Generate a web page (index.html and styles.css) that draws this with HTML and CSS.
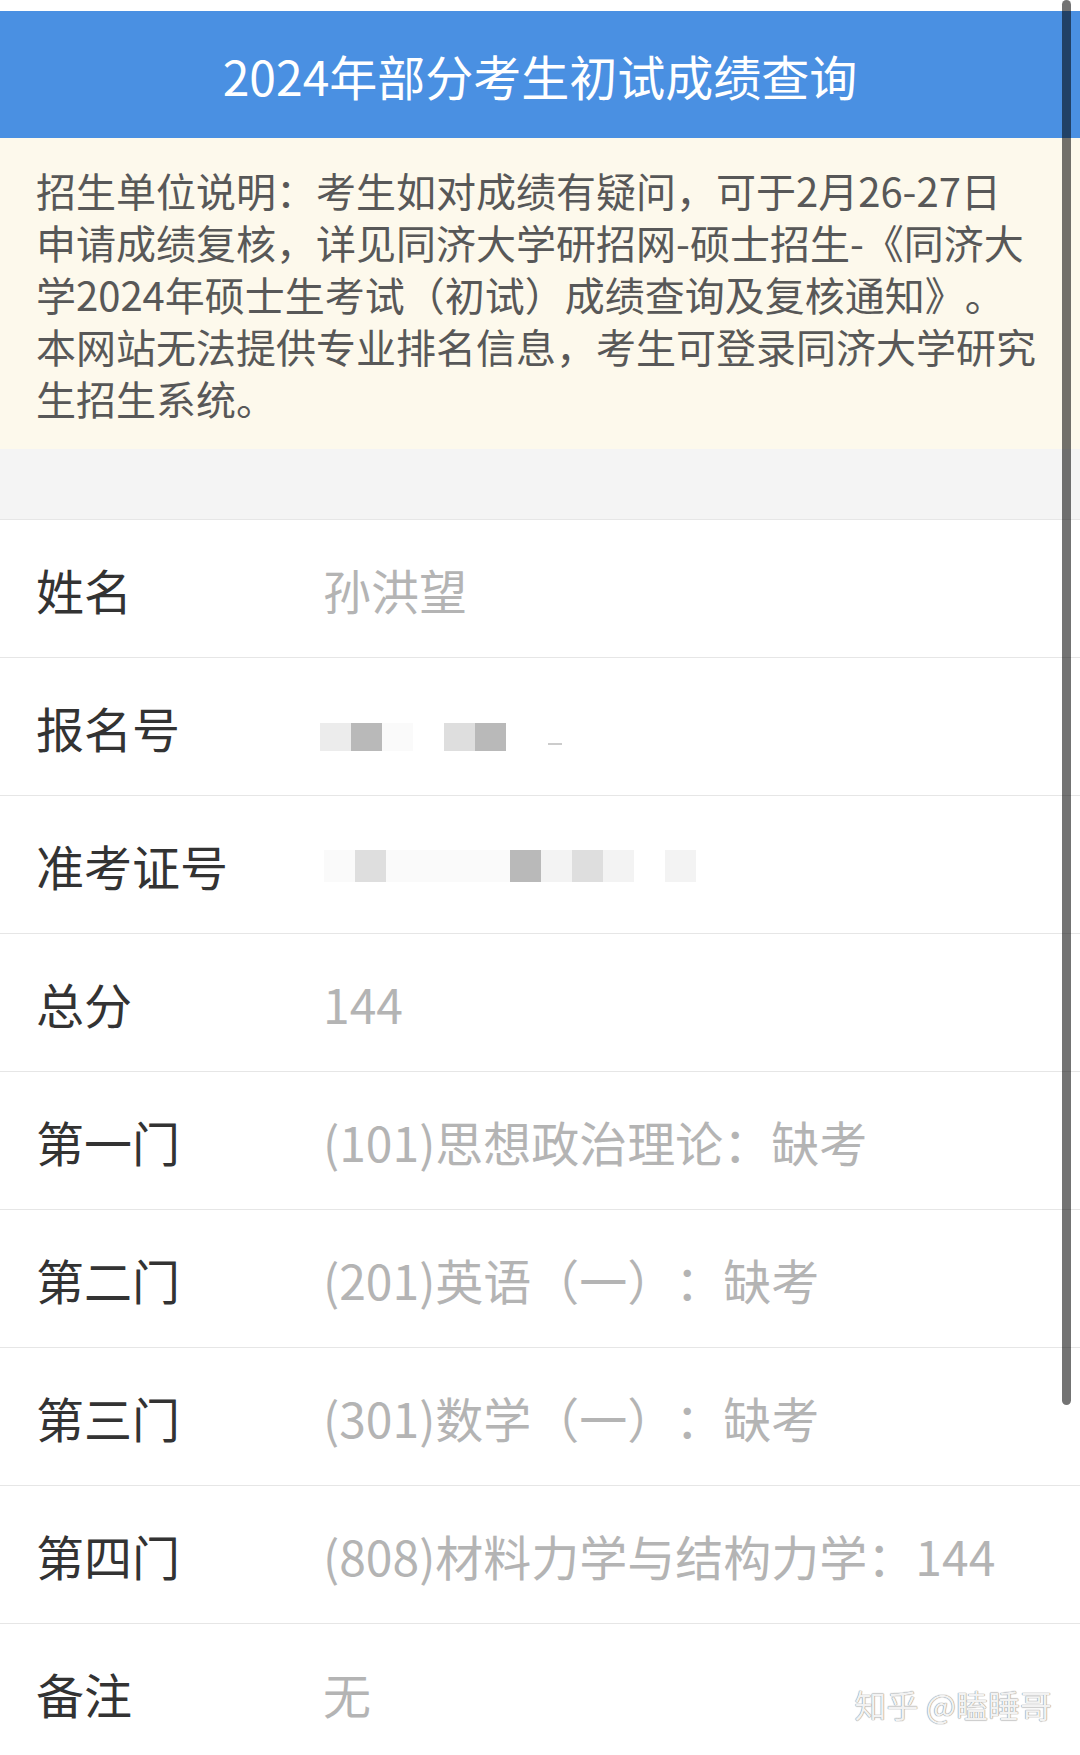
FILE: index.html
```html
<!DOCTYPE html>
<html lang="zh-CN">
<head>
    <meta charset="UTF-8">
    <title>2024年部分考生初试成绩查询</title>
    <link rel="stylesheet" href="styles.css">
</head>
<body>
    <div class="page">
        <header class="title-bar">
            <h1>2024年部分考生初试成绩查询</h1>
        </header>

        <div class="notice">
            招生单位说明：考生如对成绩有疑问，可于2月26-27日<br>
            申请成绩复核，详见同济大学研招网-硕士招生-《同济大<br>
            学2024年硕士生考试（初试）成绩查询及复核通知》。<br>
            本网站无法提供专业排名信息，考生可登录同济大学研究<br>
            生招生系统。
        </div>

        <div class="gap-band"></div>

        <div class="info-list">
            <div class="row">
                <span class="label">姓名</span>
                <span class="value">孙洪望</span>
            </div>
            <div class="row">
                <span class="label">报名号</span>
                <span class="mosaic mosaic-reg">
                    <span class="cell c-faint"></span>
                    <span class="cell c-dark"></span>
                    <span class="cell c-white"></span>
                    <span class="cell"></span>
                    <span class="cell c-light"></span>
                    <span class="cell c-dark"></span>
                    <span class="cell"></span>
                    <span class="cell c-dash"></span>
                </span>
            </div>
            <div class="row">
                <span class="label">准考证号</span>
                <span class="mosaic mosaic-exam">
                    <span class="cell c-white"></span>
                    <span class="cell c-light"></span>
                    <span class="cell c-white"></span>
                    <span class="cell c-white"></span>
                    <span class="cell c-white"></span>
                    <span class="cell c-white"></span>
                    <span class="cell c-dark"></span>
                    <span class="cell c-paper"></span>
                    <span class="cell c-light"></span>
                    <span class="cell c-paper"></span>
                    <span class="cell"></span>
                    <span class="cell c-paper"></span>
                </span>
            </div>
            <div class="row">
                <span class="label">总分</span>
                <span class="value">144</span>
            </div>
            <div class="row">
                <span class="label">第一门</span>
                <span class="value">(101)思想政治理论：缺考</span>
            </div>
            <div class="row">
                <span class="label">第二门</span>
                <span class="value">(201)英语（一）：缺考</span>
            </div>
            <div class="row">
                <span class="label">第三门</span>
                <span class="value">(301)数学（一）：缺考</span>
            </div>
            <div class="row">
                <span class="label">第四门</span>
                <span class="value">(808)材料力学与结构力学：144</span>
            </div>
            <div class="row">
                <span class="label">备注</span>
                <span class="value">无</span>
            </div>
        </div>

        <div class="watermark">知乎 @瞌睡哥</div>
        <div class="scrollbar"></div>
    </div>
</body>
</html>
```

FILE: styles.css
```css
html, body {
    margin: 0;
    padding: 0;
    overflow: hidden;
    background-color: #fff;
}
body {
    font-family: "Noto Sans CJK SC", "Noto Sans", sans-serif;
    color: #333;
    text-spacing-trim: space-all;
}
.page {
    position: relative;
    height: 1755px;
    padding-top: 11px;
    box-sizing: border-box;
}

/* title */
.title-bar {
    height: 127px;
    background-color: #4a90e2;
    display: flex;
    align-items: center;
    justify-content: center;
}
.title-bar h1 {
    margin: 0;
    color: #fff;
    font-size: 48px;
    font-weight: normal;
}

/* notice */
.notice {
    background-color: #fdf9ec;
    color: #585858;
    font-size: 40px;
    line-height: 52px;
    padding: 26px 30px 25px 36px;
    white-space: nowrap;
}
.gap-band {
    height: 70px;
    background-color: #f4f4f4;
}

/* rows */
.row {
    display: flex;
    align-items: center;
    height: 137px;
    border-top: 1px solid #e6e6e6;
    padding-left: 36px;
    font-size: 48px;
}
.label {
    width: 287px;
    flex-shrink: 0;
    color: #333;
}
.value {
    color: #b4b4b4;
}

/* blurred numbers */
.mosaic {
    display: flex;
    height: 28px;
}
.mosaic-reg {
    margin-left: -3px;
    margin-top: 20px;
}
.mosaic-exam {
    height: 32px;
    margin-left: 1px;
    margin-top: 2px;
}
.cell {
    width: 31px;
    height: 100%;
}
.c-dark {
    background-color: #b9b9b9;
}
.c-light {
    background-color: #dedede;
}
.c-paper {
    background-color: #f3f3f3;
}
.c-white {
    background-color: #fafafa;
}
.c-faint {
    background-color: #ececec;
}
.c-dash {
    background: linear-gradient(#fff 70%, #ccc 70%, #ccc 80%, #fff 80%);
    width: 14px;
    margin-left: 11px;
}

/* overlays */
.watermark {
    position: absolute;
    right: 28px;
    bottom: 28px;
    font-size: 32px;
    color: #f2f2f2;
    text-shadow: 0 0 1px #888, 0 0 1px #888;
}
.scrollbar {
    position: absolute;
    top: 0;
    right: 9px;
    width: 9px;
    height: 1405px;
    border-radius: 5px;
    background-color: rgba(0, 0, 0, 0.55);
}
```
